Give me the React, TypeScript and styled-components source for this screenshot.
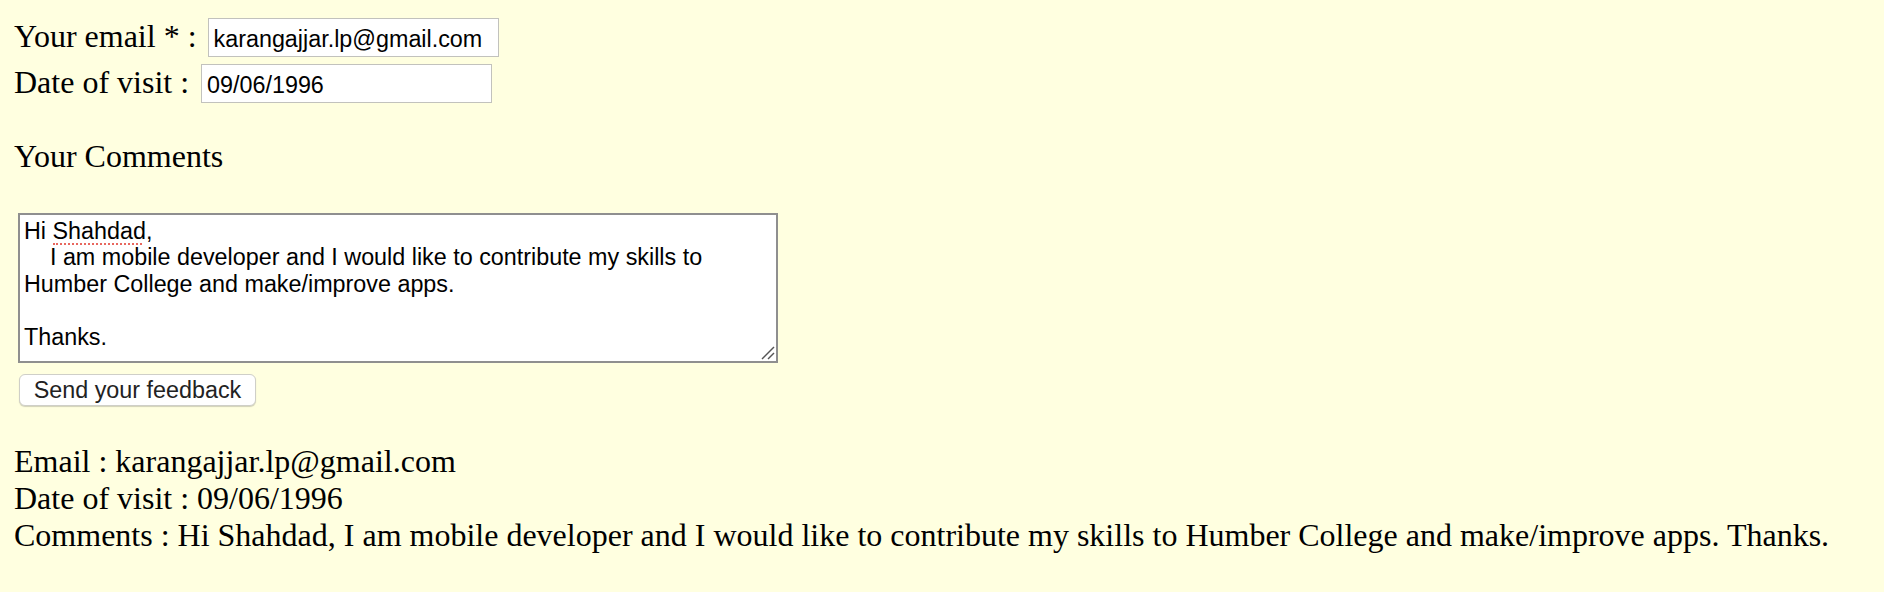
import React from "react";
import styled, { createGlobalStyle } from "styled-components";

const GlobalStyle = createGlobalStyle`
  html, body {
    background: #ffffe0;
  }
  body {
    margin: 14px;
    font-family: "Liberation Serif", "Times New Roman", serif;
    font-size: 32px;
    color: #000;
  }
`;

const Form = styled.form`
  display: flex;
  flex-direction: column;
  align-items: flex-start;
`;

const FieldRow = styled.div`
  display: flex;
  align-items: baseline;
`;

const Label = styled.label`
  line-height: normal;
  white-space: pre;
`;

const TextInput = styled.input<{ $gap: number }>`
  box-sizing: border-box;
  width: 291px;
  height: 39px;
  margin: 3.5px 0 3.5px ${(p) => p.$gap}px;
  padding: 4px 5px 0;
  border: 1px solid #c2c2bd;
  border-radius: 0;
  background: #fff;
  font-family: "Liberation Sans", Arial, sans-serif;
  font-size: 23.33px;
  color: #000;
  outline: none;
`;

const Heading = styled.p`
  margin: 32px 0 37.8px;
  line-height: normal;
`;

const CommentWrap = styled.div`
  position: relative;
  display: flex;
  margin-left: 4px;
`;

const CommentBox = styled.textarea`
  box-sizing: border-box;
  width: 760px;
  height: 150px;
  margin: 0;
  padding: 3px 4px;
  border: 2px solid #8f8f8f;
  background: #fff;
  font-family: "Liberation Sans", Arial, sans-serif;
  font-size: 23.33px;
  line-height: 26.6px;
  color: #000;
  outline: none;
  resize: none;
`;

const SpellMark = styled.span`
  position: absolute;
  height: 0;
  border-bottom: 2px dotted #e8675e;
  pointer-events: none;
`;

const Grip = styled.svg`
  position: absolute;
  right: 3px;
  bottom: 3px;
  width: 15px;
  height: 15px;
  pointer-events: none;
`;

const SubmitButton = styled.button`
  box-sizing: border-box;
  width: 237px;
  height: 32px;
  margin: 11px 0 0 5px;
  padding: 0;
  border: 1px solid #cfcfc8;
  border-radius: 6px;
  background: #fff;
  box-shadow: 0 1px 1px rgba(0, 0, 0, 0.18);
  font-family: "Liberation Sans", Arial, sans-serif;
  font-size: 23.33px;
  color: #222;
  line-height: 30px;
`;

const Output = styled.div`
  margin-top: 37px;
  display: flex;
  flex-direction: column;
`;

const OutputLine = styled.div`
  line-height: normal;
  white-space: nowrap;
`;

const email = "karangajjar.lp@gmail.com";
const date = "09/06/1996";
const comment =
  "Hi Shahdad,\n    I am mobile developer and I would like to contribute my skills to\nHumber College and make/improve apps.\n\nThanks.";

export default function App() {
  return (
    <>
      <GlobalStyle />
      <Form onSubmit={(e) => e.preventDefault()}>
        <FieldRow>
          <Label htmlFor="email">Your email * :</Label>
          <TextInput id="email" type="text" $gap={11} defaultValue={email} />
        </FieldRow>
        <FieldRow>
          <Label htmlFor="date">Date of visit :</Label>
          <TextInput id="date" type="text" $gap={12} defaultValue={date} />
        </FieldRow>
        <Heading>Your Comments</Heading>
        <CommentWrap>
          <CommentBox spellCheck={false} defaultValue={comment} />
          <SpellMark style={{ left: 35, top: 30, width: 89 }} />
          <Grip viewBox="0 0 15 15">
            <line x1="2" y1="14" x2="14" y2="2" stroke="#555" strokeWidth="1.5" />
            <line x1="8" y1="14" x2="14" y2="8" stroke="#555" strokeWidth="1.5" />
          </Grip>
        </CommentWrap>
        <SubmitButton type="submit">Send your feedback</SubmitButton>
      </Form>
      <Output>
        <OutputLine>Email : {email}</OutputLine>
        <OutputLine>Date of visit : {date}</OutputLine>
        <OutputLine>
          Comments : Hi Shahdad, I am mobile developer and I would like to contribute my skills to Humber College and
          make/improve apps. Thanks.
        </OutputLine>
      </Output>
    </>
  );
}
